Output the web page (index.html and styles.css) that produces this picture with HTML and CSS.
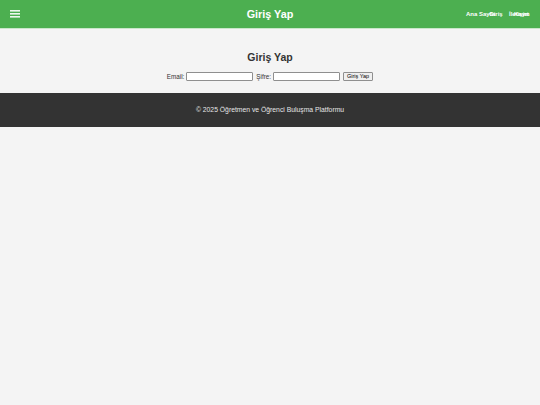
FILE: index.html
```html
<!DOCTYPE html>
<html lang="tr">
<head>
    <meta charset="UTF-8">
    <meta name="viewport" content="width=device-width, initial-scale=1.0">
    <title>Giriş Yap</title>
    <link rel="stylesheet" href="styles.css">
</head>
<body>
    <header class="topbar">
        <button class="menu-toggle" aria-label="Menü">
            <svg width="10" height="8" viewBox="0 0 10 8">
                <rect x="0" y="0" width="10" height="1.6" fill="#eef7ee"/>
                <rect x="0" y="3" width="10" height="1.6" fill="#eef7ee"/>
                <rect x="0" y="6" width="10" height="1.6" fill="#eef7ee"/>
            </svg>
        </button>
        <h1 class="site-title">Giriş Yap</h1>
        <nav class="nav">
            <a href="#">Ana Sayfa</a>
            <a href="#">Giriş</a>
            <a href="#">İletişim</a>
            <a href="#">Kayıt</a>
        </nav>
    </header>

    <main class="content">
        <h2>Giriş Yap</h2>
        <form class="login-form">
            <label for="email">Email:</label>
            <input type="email" id="email">
            <label for="password">Şifre:</label>
            <input type="password" id="password">
            <button type="submit" class="btn">Giriş Yap</button>
        </form>
    </main>

    <footer class="footer">
        <p>&copy; 2025 Öğretmen ve Öğrenci Buluşma Platformu</p>
    </footer>
</body>
</html>
```

FILE: styles.css
```css
body {
    font-family: "Liberation Sans", Arial, sans-serif;
    margin: 0;
    background-color: #f4f4f4;
    color: #333;
}
.topbar {
    display: grid;
    grid-template-columns: 1fr auto 1fr;
    align-items: center;
    height: 28px;
    padding: 0 9px;
    background-color: #4caf50;
    border-bottom: 1px solid #c9e7ca;
    color: #fff;
}
.menu-toggle {
    justify-self: start;
    display: flex;
    padding: 0;
    margin-left: 1px;
    background: none;
    border: none;
    cursor: pointer;
}
.site-title {
    margin: 0;
    font-size: 10.8px;
    font-weight: bold;
}
.nav {
    justify-self: end;
    display: flex;
    width: 64px;
    margin-right: 1px;
}
.nav a {
    flex: none;
    color: #fff;
    text-decoration: none;
    font-size: 6px;
    font-weight: bold;
    white-space: nowrap;
}
.nav a:nth-child(1) { width: 23px; }
.nav a:nth-child(2) { width: 20px; }
.nav a:nth-child(3) { width: 5px; }
.content {
    padding: 22px 0 12px;
    text-align: center;
}
.content h2 {
    margin: 0 0 8px;
    font-size: 10.5px;
    line-height: 13px;
}
.login-form {
    display: flex;
    justify-content: center;
    align-items: center;
    gap: 2px;
    font-size: 6.3px;
}
.login-form input {
    width: 67px;
    height: 9px;
    padding: 0;
    border: 1px solid #8f8f8f;
    border-radius: 1px;
    background: #fff;
    box-sizing: border-box;
}
.login-form label + input {
    margin-right: 1px;
}
.btn {
    height: 9px;
    padding: 0 3px;
    font-family: "Liberation Sans", Arial, sans-serif;
    font-size: 5.5px;
    color: #000;
    background-color: #efefef;
    border: 1px solid #8f8f8f;
    border-radius: 1px;
    line-height: 7px;
}
.footer {
    padding: 13px 0;
    background-color: #333;
    color: #e6e6e6;
    text-align: center;
}
.footer p {
    margin: 0;
    font-size: 6.8px;
    line-height: 8px;
}
```
